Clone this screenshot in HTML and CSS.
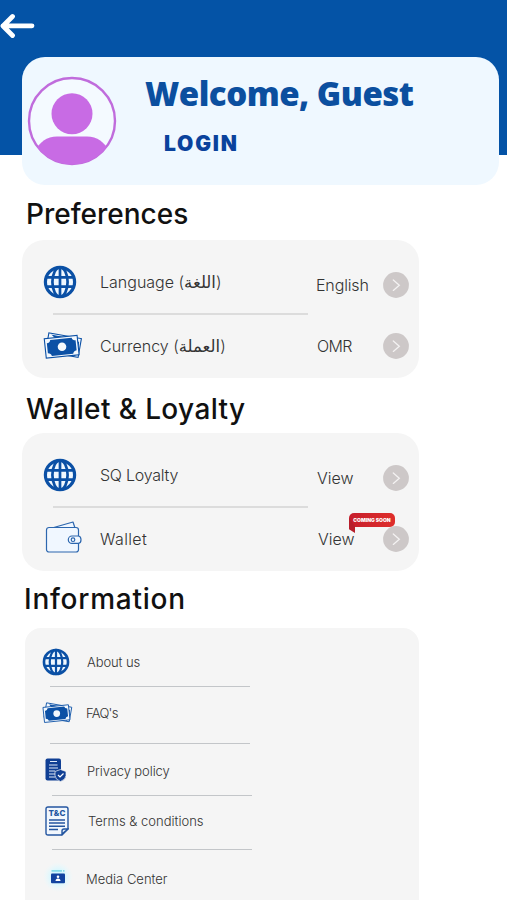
FILE: index.html
```html
<!DOCTYPE html>
<html lang="en">
<head>
<meta charset="utf-8">
<meta name="viewport" content="width=device-width, initial-scale=1">
<title>Account</title>
<link rel="stylesheet" href="styles.css">
</head>
<body>
<svg class="sprite" aria-hidden="true">
  <symbol id="globe" viewBox="0 0 34 34">
    <g fill="none" stroke="#0b50a5" stroke-width="2.7">
      <circle cx="17" cy="17" r="14.6" fill="#f0f8ff" stroke-width="3.2"/>
      <ellipse cx="17" cy="17" rx="7.600" ry="14.6"/>
      <path d="M17 2v30M3 12.300h28M3 21.700h28"/>
    </g>
  </symbol>
  <symbol id="cash" viewBox="0 0 40 30">
    <g stroke="#0b50a5" stroke-width="1.1">
      <rect x="4" y="4.5" width="33" height="19" fill="#f3f8fd" transform="rotate(10 20 14)"/>
      <path d="M10 4.500l22 4 3.500 3-1 10-3 3z" fill="#0b50a5"/>
      <rect x="2.2" y="6" width="33" height="19.5" fill="#f3f8fd" transform="rotate(-6 19 16)"/>
    </g>
    <path d="M8 7.800h21.500q.5 2.700 3.700 3v10q-3.200.3-3.700 3H8q-.5-2.700-3.700-3v-10q3.200-.3 3.700-3z" fill="#0b50a5" transform="rotate(-6 19 16)"/>
    <circle cx="19" cy="15.700" r="4.300" fill="#f3f8fd"/>
  </symbol>
  <symbol id="chevron" viewBox="0 0 26 26">
    <circle cx="13" cy="13" r="12.900" fill="#cdc8c8"/>
    <path d="M10.300 8l6 5.200-6 5.200" fill="none" stroke="#f4f2f2" stroke-width="1.300" stroke-linecap="round"/>
  </symbol>
</svg>

<header class="topbar">
  <svg class="back" viewBox="0 0 36 28"><path d="M12.500 4.500L3 14l9.500 9.500M3 13.800h29" fill="none" stroke="#fff" stroke-width="4.800" stroke-linecap="round" stroke-linejoin="round"/></svg>
</header>

<section class="profile">
  <svg class="avatar" viewBox="0 0 90 90">
    <clipPath id="disc"><circle cx="45" cy="45" r="43.500"/></clipPath>
    <circle cx="45" cy="45" r="43" fill="#f4faff" stroke="#c06cdc" stroke-width="2.400"/>
    <circle cx="45" cy="37.700" r="20.500" fill="#c86be4"/>
    <path d="M8 76c4-10 12-15.500 22-15.500h30c10 0 18 5.500 22 15.500v14H8z" fill="#c86be4" clip-path="url(#disc)"/>
  </svg>
  <div class="greeting">
    <h1>Welcome, Guest</h1>
    <a class="login">LOGIN</a>
  </div>
</section>

<main>
  <h2 class="h-pref">Preferences</h2>
  <section class="card">
    <div class="row first">
      <svg class="icon globe"><use href="#globe"/></svg>
      <span class="label">Language (<bdi class="ar">اللغة</bdi>)</span>
      <span class="value t-english">English</span>
      <svg class="chev"><use href="#chevron"/></svg>
    </div>
    <hr>
    <div class="row">
      <svg class="icon cash"><use href="#cash"/></svg>
      <span class="label">Currency (<bdi class="ar">العملة</bdi>)</span>
      <span class="value t-omr">OMR</span>
      <svg class="chev"><use href="#chevron"/></svg>
    </div>
  </section>

  <h2 class="h-wallet">Wallet &amp; Loyalty</h2>
  <section class="card">
    <div class="row first">
      <svg class="icon globe"><use href="#globe"/></svg>
      <span class="label t-loyalty">SQ Loyalty</span>
      <span class="value">View</span>
      <svg class="chev"><use href="#chevron"/></svg>
    </div>
    <hr>
    <div class="row">
      <svg class="icon wallet" viewBox="0 0 38 34">
        <g fill="#f0f7ff" stroke="#2c66ae" stroke-width="1.200" stroke-linejoin="round">
          <path d="M7 8L28 2l2 6z"/>
          <rect x="1.500" y="7.500" width="32" height="24.500" rx="2.500"/>
          <path d="M33.500 16H27a3.700 3.700 0 0 0 0 7.400h6.500q2.500-.5 2.500-3.700t-2.500-3.700z"/>
          <circle cx="28" cy="19.700" r="1.800"/>
        </g>
      </svg>
      <span class="label t-wallet">Wallet</span>
      <span class="value second">View</span>
      <svg class="chev"><use href="#chevron"/></svg>
      <span class="soon">COMING SOON</span>
    </div>
  </section>

  <h2 class="h-info">Information</h2>
  <section class="card info">
    <div class="item about">
      <svg class="icon"><use href="#globe"/></svg><span>About us</span>
    </div>
    <hr>
    <div class="item faq">
      <svg class="icon"><use href="#cash"/></svg><span>FAQ's</span>
    </div>
    <hr>
    <div class="item privacy">
      <svg class="icon" viewBox="0 0 22 24">
        <rect x=".5" y=".5" width="15.500" height="22" rx="2" fill="#103f94"/>
        <path d="M5 3.500h7M4 7h8.500M4 10h9M4 13h6M4 16h6M4 19h6" stroke="#dfeaf8" stroke-width="1.100"/>
        <path d="M15.500 11.500l5.500 2v4q0 4-5.500 6-5.500-2-5.500-6v-4z" fill="#103f94" stroke="#f5f5f5" stroke-width=".7"/>
        <path d="M13 17l2 2 3.500-3.500" fill="none" stroke="#fff" stroke-width="1.200"/>
      </svg><span>Privacy policy</span>
    </div>
    <hr class="inset">
    <div class="item terms">
      <svg class="icon" viewBox="0 0 24 30">
        <path d="M3 1h18q2 0 2 2v20l-6 6H3q-2 0-2-2V3q0-2 2-2z" fill="#f2f7fd" stroke="#2456a0" stroke-width="1.400"/>
        <path d="M17 28v-3q0-2 2-2h4z" fill="#dce9f7" stroke="#2456a0" stroke-width="1.400"/>
        <path d="M4 14h16M4 17h16M4 20.300h16M4 23.500h9" stroke="#2456a0" stroke-width="1.400"/>
        <text x="12" y="10.400" text-anchor="middle" textLength="17" class="tc">T&amp;C</text>
      </svg><span>Terms &amp; conditions</span>
    </div>
    <hr class="inset">
    <div class="item media">
      <svg class="icon" viewBox="0 0 30 30">
        <defs><radialGradient id="glow"><stop offset=".4" stop-color="#d3f7ff"/><stop offset="1" stop-color="#e5faff" stop-opacity="0"/></radialGradient></defs>
        <circle cx="15" cy="15" r="15" fill="url(#glow)"/>
        <path d="M8.500 8.800h10.500M20 8.800h1.500" stroke="#86dcea" stroke-width="1.800"/>
        <rect x="8" y="11.500" width="14" height="9.800" rx="1" fill="#1143a0"/>
        <circle cx="15" cy="14.800" r="1.300" fill="#fff"/><path d="M12.500 19q0-2.500 2.500-2.500t2.500 2.500z" fill="#fff"/>
      </svg><span>Media Center</span>
    </div>
  </section>
</main>
</body>
</html>
```

FILE: styles.css
```css
* { box-sizing: border-box; }
html { overflow: hidden; }
body {
  margin: 0;
  height: 900px;
  overflow: hidden;
  background: #fff;
  color: #333;
  font-family: Inter, "DejaVu Sans", sans-serif;
}
.sprite { position: absolute; width: 0; height: 0; }
svg { display: block; flex: none; }

.topbar { height: 155px; padding-top: 12px; background: #0453a6; }
.back { width: 36px; height: 28px; }

.profile {
  display: flex;
  width: 477px;
  height: 128px;
  margin: -98px 0 0 22px;
  padding: 19px 0 0 5px;
  border-radius: 23px;
  background: #eff8ff;
}
.avatar { width: 90px; height: 90px; }
.greeting { display: flex; flex-direction: column; align-items: flex-start; padding-left: 28px; }
h1 {
  margin: -2px 0 0;
  color: #0b4f9f;
  font: 800 33px/40px "Open Sans", sans-serif;
  letter-spacing: -.5px;
  white-space: nowrap;
}
.login { margin: 18px 0 0 19px; color: #0a429c; font-size: 21px; line-height: 24px; font-weight: 900; letter-spacing: 1.8px; }

main { padding-left: 22px; }
h2 { margin: 0; height: 55px; line-height: 58px; color: #111; font-size: 28px; font-weight: 500; white-space: nowrap; }
.h-pref { padding-left: 4px; }
.h-wallet { padding-left: 4px; line-height: 62px; letter-spacing: .37px; }
.h-info { height: 57px; padding-left: 2px; line-height: 56px; letter-spacing: .75px; }

.card { width: 397px; height: 138px; border-radius: 22px; background: #f5f5f5; }
hr { width: 255px; height: 2px; margin: 0 0 0 31px; border: 0; background: #dcdcdc; }
.row {
  position: relative;
  display: grid;
  grid-template-columns: 78px 217px 66px 26px;
  align-items: center;
  height: 62px;
  font-size: 16px;
  font-weight: 300;
  white-space: nowrap;
}
.row.first { height: 73px; padding-top: 11px; }
.row.first .value, .row.first .chev { margin-top: 6px; }
.globe { width: 34px; height: 34px; margin-left: 21px; }
.cash { width: 40px; height: 30px; margin-left: 21px; }
.wallet { width: 38px; height: 34px; margin: -5px 0 0 23px; }
.chev { width: 26px; height: 26px; }
.ar { font: 16.5px/16px "DejaVu Sans", sans-serif; }
.t-english { letter-spacing: -.15px; margin-left: -1px; }
.t-omr { letter-spacing: -.6px; }
.t-loyalty { letter-spacing: -.25px; }
.t-wallet { letter-spacing: .35px; }
.second { padding-left: 1px; }
.soon {
  position: absolute;
  left: 327px;
  top: 5px;
  width: 46px;
  height: 14px;
  border-radius: 5px;
  background: linear-gradient(90deg, #c61e2c, #df2e2b);
  color: #fff;
  font-size: 5px;
  line-height: 14px;
  font-weight: 900;
  text-align: center;
}
.soon::before {
  content: "";
  position: absolute;
  left: 0;
  top: 5px;
  width: 6px;
  height: 15px;
  background: #b71e2b;
  clip-path: polygon(0 0, 100% 55%, 100% 100%, 0 75%);
}

.info { width: 394px; height: 290px; margin-left: 3px; padding-top: 9px; border-radius: 16px; }
.info hr { width: 200px; height: 1px; margin-left: 25px; background: #c3c6c9; }
.info .inset { margin-left: 27px; }
.item { display: flex; align-items: center; font-size: 13px; font-weight: 300; white-space: nowrap; }
.item .icon { margin-left: 17px; }
.about { height: 49px; }
.about .icon { width: 28px; height: 28px; }
.about span { margin-left: 17px; letter-spacing: -.1px; }
.faq { height: 56px; padding-bottom: 5px; }
.faq .icon { width: 31px; height: 24px; }
.faq span { margin-left: 13px; letter-spacing: -.7px; }
.privacy { height: 51px; padding-top: 3px; }
.privacy .icon { width: 22px; height: 24px; margin: -2px 0 0 20px; }
.privacy span { margin-left: 20px; letter-spacing: -.1px; }
.terms { height: 53px; padding-bottom: 4px; }
.terms .icon { width: 24px; height: 30px; margin-left: 20px; }
.terms span { margin-left: 19px; }
.tc { fill: #2456a0; font: 800 8px Inter, sans-serif; }
.media { height: 58px; }
.media .icon { width: 30px; height: 30px; margin-top: -4px; margin-left: 18px; }
.media span { margin-left: 13px; }
```
